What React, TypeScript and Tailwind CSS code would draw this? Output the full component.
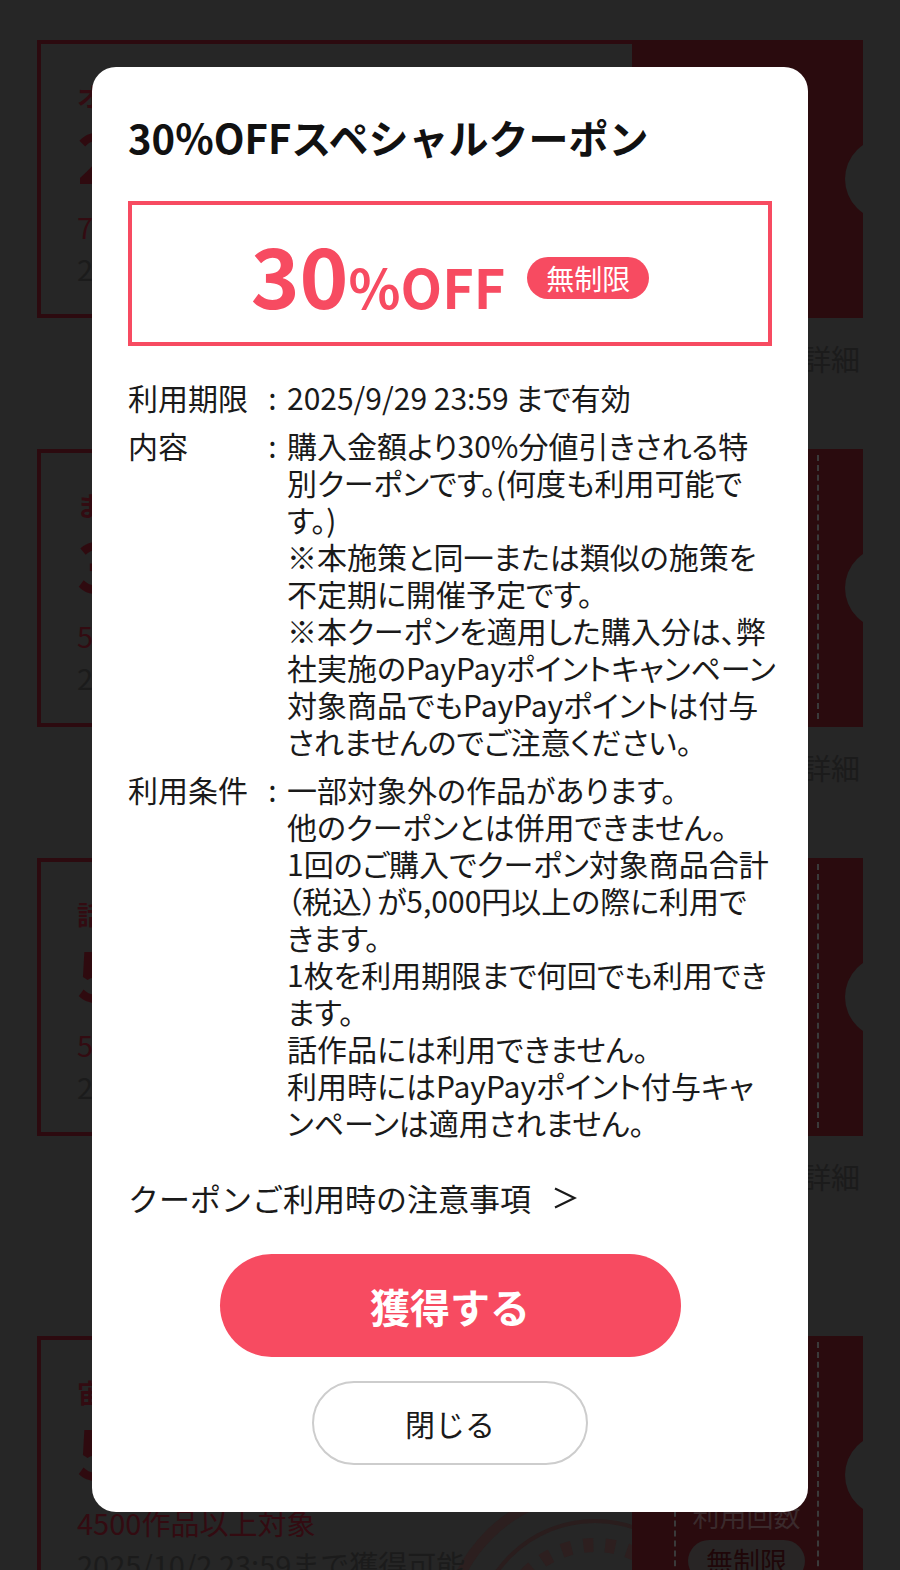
import React from "react";

type Coupon = {
  label: string;
  amount: string;
  target: string;
  deadline: string;
  perforated?: boolean;
  usage?: boolean;
  stamp?: boolean;
};

// page behind the dialog, already dimmed by the backdrop
const sections: Coupon[][] = [
  [
    {
      label: "オールジャンル対象",
      amount: "20",
      target: "70000作品以上対象",
      deadline: "2025/9/30 23:59まで獲得可能",
    },
    {
      label: "まとめ買い対象",
      amount: "30",
      target: "5000作品以上対象",
      deadline: "2025/9/30 23:59まで獲得可能",
      perforated: true,
    },
    {
      label: "話作品対象",
      amount: "50",
      target: "5000作品以上対象",
      deadline: "2025/9/29 23:59まで獲得可能",
      perforated: true,
    },
  ],
  [
    {
      label: "宙出版対象",
      amount: "50",
      target: "4500作品以上対象",
      deadline: "2025/10/2 23:59まで獲得可能",
      perforated: true,
      usage: true,
      stamp: true,
    },
  ],
];

const terms = [
  { label: "利用期限", value: "2025/9/29 23:59 まで有効" },
  {
    label: "内容",
    value:
      "購入金額より30%分値引きされる特\n別クーポンです。(何度も利用可能で\nす。)\n※本施策と同一または類似の施策を\n不定期に開催予定です。\n※本クーポンを適用した購入分は、弊\n社実施のPayPayポイントキャンペーン\n対象商品でもPayPayポイントは付与\nされませんのでご注意ください。",
  },
  {
    label: "利用条件",
    value:
      "一部対象外の作品があります。\n他のクーポンとは併用できません。\n1回のご購入でクーポン対象商品合計\n（税込）が5,000円以上の際に利用で\nきます。\n1枚を利用期限まで何回でも利用でき\nます。\n話作品には利用できません。\n利用時にはPayPayポイント付与キャ\nンペーンは適用されません。",
  },
];

function CouponCard({ coupon }: { coupon: Coupon }) {
  return (
    <div>
      <div className="relative flex h-[278px] overflow-hidden">
        {coupon.stamp && (
          <svg
            className="absolute left-[393px] top-[140px]"
            width="330"
            height="330"
            viewBox="0 0 330 330"
            fill="none"
          >
            <circle cx="165" cy="165" r="150" stroke="#2c1f1f" strokeWidth="10" />
            <circle cx="165" cy="165" r="120" stroke="#2a1d1d" strokeWidth="4" />
            <circle cx="165" cy="165" r="96" stroke="#2d1f1f" strokeWidth="14" strokeDasharray="10 12" />
          </svg>
        )}
        <div className="relative flex flex-1 flex-col border-[4px] border-r-0 border-[#2c0a0f] pl-[36px] pt-[34px]">
          <p className="text-[26px] font-bold leading-[36px] text-[#330b11]">
            {coupon.label}
          </p>
          <p className="text-[70px] font-bold leading-[80px] text-[#2f0a0f]">
            {coupon.amount}
            <span className="text-[44px]">%OFF</span>
          </p>
          <p className="text-[29px] leading-[42px] text-[#330b11]">
            {coupon.target}
          </p>
          <p className="text-[29px] leading-[42px] text-[#1b1b1b]">
            {coupon.deadline}
          </p>
        </div>
        <div className="relative w-[231px] bg-[#2a0b0e]">
          {coupon.perforated && (
            <>
              <span className="absolute bottom-[8px] left-[42px] top-[6px] border-l-2 border-dashed border-[#3a3a3a]" />
              <span className="absolute bottom-[8px] left-[185px] top-[6px] border-l-2 border-dashed border-[#3a3a3a]" />
            </>
          )}
          {coupon.usage && (
            <div className="ml-[44px] flex w-[141px] flex-col items-center pt-[162px]">
              <span className="text-[27px] leading-[36px] text-[#3a2a2c]">
                利用回数
              </span>
              <span className="mt-[6px] rounded-full bg-[#282525] px-[18px] text-[27px] leading-[42px] text-[#1f0709]">
                無制限
              </span>
            </div>
          )}
          <span className="absolute left-[213px] top-1/2 size-[82px] -translate-y-1/2 rounded-full bg-[#262626]" />
        </div>
      </div>
      <div className="flex justify-end pr-[3px] pt-[22px]">
        <span className="text-[29px] leading-[37px] text-[#1b1b1b]">詳細</span>
      </div>
    </div>
  );
}

function CouponDialog() {
  return (
    <div className="absolute inset-0 flex items-start justify-center pt-[67px]">
      <div
        role="dialog"
        className="flex w-[716px] flex-col rounded-[24px] bg-white px-[36px] pb-[47px] pt-[44px]"
      >
        <h2 className="text-[40px] font-bold leading-[52px] text-[#111]">
          30%OFFスペシャルクーポン
        </h2>

        <div className="mt-[38px] flex h-[145px] items-center justify-center gap-[22px] border-[4px] border-[#f74b61]">
          <p className="font-bold leading-none text-[#f74b61]">
            <span className="text-[83px]">30</span>
            <span className="text-[54px]">%OFF</span>
          </p>
          <span className="mt-[8px] rounded-full bg-[#f74b61] px-[19px] text-[28px] leading-[42px] text-white">
            無制限
          </span>
        </div>

        <dl className="mt-[33px] flex flex-col gap-[11px] text-[30px] leading-[37px] text-[#1a1a1a] [font-feature-settings:'palt']">
          {terms.map((t) => (
            <div key={t.label} className="flex">
              <dt className="w-[130px] shrink-0">{t.label}</dt>
              <span className="w-[29px] shrink-0 text-center">:</span>
              <dd className="whitespace-pre">{t.value}</dd>
            </div>
          ))}
        </dl>

        <a className="mt-[38px] flex items-center gap-[22px] self-start text-[31px] leading-[37px] text-[#1a1a1a]">
          クーポンご利用時の注意事項
          <svg width="24" height="22" viewBox="0 0 24 22" fill="none">
            <path d="M2 1.5 21.5 11 2 20.5" stroke="#1a1a1a" strokeWidth="2.2" />
          </svg>
        </a>

        <button className="mt-[38px] h-[103px] w-[461px] self-center rounded-full bg-[#f74b61] text-[40px] font-bold text-white">
          獲得する
        </button>
        <button className="mt-[24px] h-[84px] w-[276px] self-center rounded-full border-2 border-[#cdcdcd] bg-white text-[30px] text-[#1a1a1a]">
          閉じる
        </button>
      </div>
    </div>
  );
}

export default function App() {
  return (
    <div className="relative h-[1570px] w-full overflow-hidden bg-[#262626] font-['Noto_Sans_CJK_JP',sans-serif]">
      <div className="flex flex-col gap-[141px] px-[37px] pt-[40px]">
        {sections.map((cards, i) => (
          <div key={i} className="flex flex-col gap-[72px]">
            {cards.map((c) => (
              <CouponCard key={c.label} coupon={c} />
            ))}
          </div>
        ))}
      </div>
      <CouponDialog />
    </div>
  );
}
